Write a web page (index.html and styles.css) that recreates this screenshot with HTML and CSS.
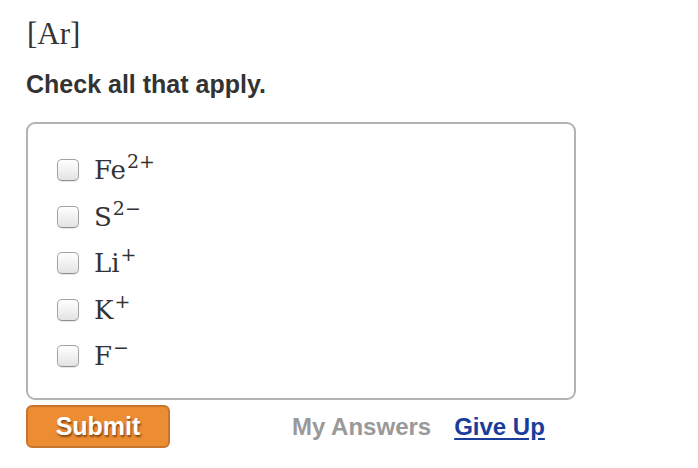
FILE: index.html
```html
<!DOCTYPE html>
<html>
<head>
<meta charset="utf-8">
<link rel="stylesheet" href="styles.css">
</head>
<body>
<div class="page">
  <div class="formula">[Ar]</div>
  <div class="prompt">Check all that apply.</div>
  <div class="box">
    <label class="row"><span class="cb"></span><span class="chem">Fe<sup>2+</sup></span></label>
    <label class="row"><span class="cb"></span><span class="chem">S<sup>2&minus;</sup></span></label>
    <label class="row"><span class="cb"></span><span class="chem">Li<sup>+</sup></span></label>
    <label class="row"><span class="cb"></span><span class="chem">K<sup>+</sup></span></label>
    <label class="row"><span class="cb"></span><span class="chem">F<sup>&minus;</sup></span></label>
  </div>
  <div class="actions">
    <button class="submit">Submit</button>
    <span class="links">
      <span class="my">My Answers</span>
      <a class="give" href="#">Give Up</a>
    </span>
  </div>
</div>
</body>
</html>
```
FILE: styles.css
```css
html, body { margin: 0; padding: 0; background: #fff; }
.page {
  padding: 14px 0 0 26px;
  width: 550px;
  font-family: "Liberation Sans", Arial, sans-serif;
  color: #333;
}
.formula {
  font-family: "Liberation Serif", "Times New Roman", serif;
  font-size: 31px;
  line-height: 40px;
  color: #333;
  padding-left: 1px;
}
.prompt {
  font-weight: bold;
  font-size: 25px;
  line-height: 30px;
  margin-top: 15px;
  color: #333;
}
.box {
  margin-top: 23px;
  border: 2px solid #b3b3b3;
  border-radius: 9px;
  height: 278px;
  box-sizing: border-box;
  padding: 23px 0 0 29px;
}
.row {
  display: flex;
  align-items: center;
  height: 46.5px;
}
.cb {
  width: 20px;
  height: 20px;
  border: 1px solid #a3a3a3;
  border-bottom-color: #8f8f8f;
  border-radius: 5px;
  background: linear-gradient(#fff, #e3e3e3);
  box-shadow: inset 0 1px 1px rgba(255,255,255,0.8), 0 1px 1px rgba(0,0,0,0.1);
  flex: none;
}
.chem {
  margin-left: 15px;
  font-family: "DejaVu Serif", "Liberation Serif", serif;
  font-size: 26px;
  color: #333;
  line-height: 1;
}
.chem sup {
  font-size: 19px;
  vertical-align: 11px;
  line-height: 0;
  margin-left: 1px;
}
.actions {
  display: flex;
  align-items: center;
  margin-top: 5px;
}
.submit {
  width: 144px;
  height: 43px;
  background: #ec8c33;
  border: 2px solid #c8742e;
  border-radius: 6px;
  color: #fff;
  font-family: "Liberation Sans", Arial, sans-serif;
  font-weight: bold;
  font-size: 25px;
  text-shadow: 1px 2px 2px rgba(90,40,0,0.7);
  padding: 0;
}
.links {
  margin-left: 122px;
  display: flex;
  gap: 23px;
  font-size: 24px;
  font-weight: bold;
}
.my { color: #999; }
.give { color: #1a3d9c; text-decoration: underline; text-underline-offset: 3px; }
```
